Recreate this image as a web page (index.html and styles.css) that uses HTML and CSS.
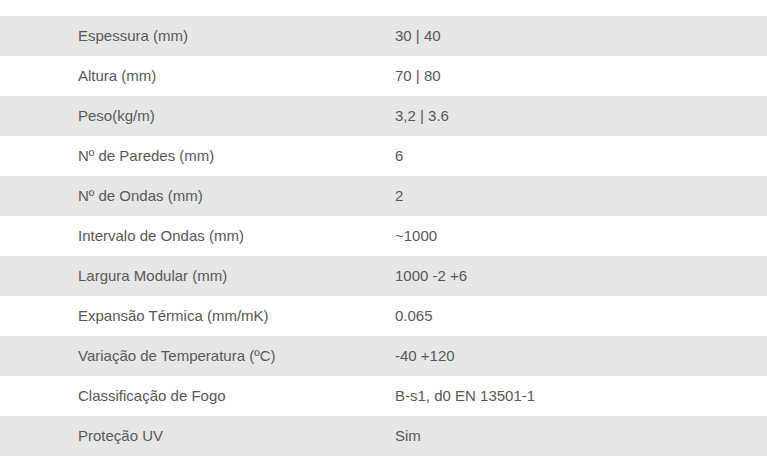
FILE: index.html
```html
<!DOCTYPE html>
<html lang="pt">
<head>
<meta charset="utf-8">
<link rel="stylesheet" href="styles.css">
</head>
<body>
<div class="specs">
  <div class="row"><div class="label">Espessura (mm)</div><div class="value">30 | 40</div></div>
  <div class="row"><div class="label">Altura (mm)</div><div class="value">70 | 80</div></div>
  <div class="row"><div class="label">Peso(kg/m)</div><div class="value">3,2 | 3.6</div></div>
  <div class="row"><div class="label">Nº de Paredes (mm)</div><div class="value">6</div></div>
  <div class="row"><div class="label">Nº de Ondas (mm)</div><div class="value">2</div></div>
  <div class="row"><div class="label">Intervalo de Ondas (mm)</div><div class="value">~1000</div></div>
  <div class="row"><div class="label">Largura Modular (mm)</div><div class="value">1000 -2 +6</div></div>
  <div class="row"><div class="label">Expansão Térmica (mm/mK)</div><div class="value">0.065</div></div>
  <div class="row"><div class="label">Variação de Temperatura (ºC)</div><div class="value">-40 +120</div></div>
  <div class="row"><div class="label">Classificação de Fogo</div><div class="value">B-s1, d0 EN 13501-1</div></div>
  <div class="row"><div class="label">Proteção UV</div><div class="value">Sim</div></div>
</div>
</body>
</html>
```
FILE: styles.css
```css
html, body {
  margin: 0;
  background: #ffffff;
}
body {
  padding-top: 16px;
  font-family: "Liberation Sans", Arial, sans-serif;
  font-size: 15px;
  color: #595959;
}
.specs {
  display: flex;
  flex-direction: column;
}
.row {
  display: grid;
  grid-template-columns: 395px 1fr;
  height: 40px;
  padding-bottom: 1px;
  box-sizing: border-box;
  align-items: center;
}
.row:nth-child(odd) {
  background: #e6e6e6;
}
.label {
  padding-left: 78px;
}
```
